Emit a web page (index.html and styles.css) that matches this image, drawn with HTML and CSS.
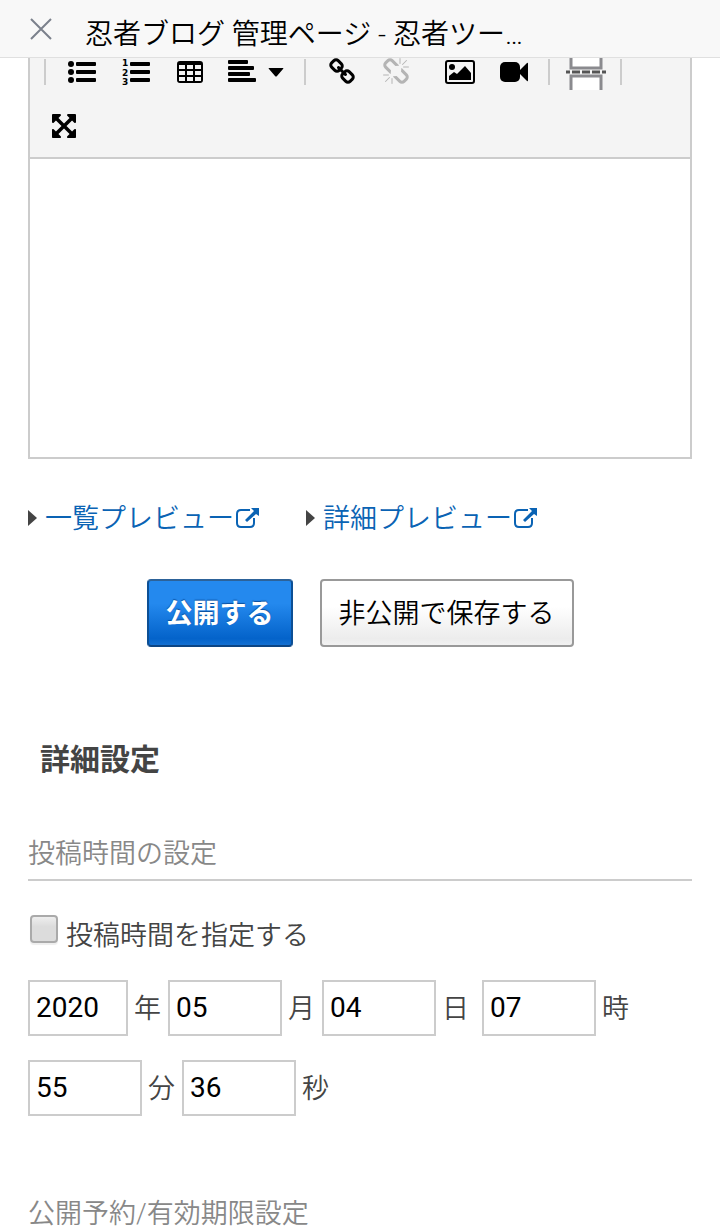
FILE: index.html
```html
<!DOCTYPE html>
<html lang="ja">
<head>
    <meta charset="UTF-8">
    <meta name="viewport" content="width=device-width, initial-scale=1.0">
    <title>忍者ブログ 管理ページ</title>
    <link rel="stylesheet" href="styles.css">
</head>
<body>

    <!-- Title bar -->
    <header class="titlebar">
        <button type="button" class="close" aria-label="閉じる">
            <svg width="24" height="24" viewBox="0 0 24 24"><path d="M2 2L22 22M22 2L2 22" fill="none" stroke="#7b818c" stroke-width="2"/></svg>
        </button>
        <p class="titlebar-text">忍者ブログ 管理ページ - 忍者ツー…</p>
    </header>

    <main class="page">
        <!-- Editor -->
        <div class="editor">
            <div class="toolbar">
                <span class="separator"></span>
                <button type="button" class="tool" aria-label="箇条書き">
                    <svg width="28" height="24" viewBox="0 0 28 24">
                        <circle cx="3" cy="4" r="3"/><circle cx="3" cy="12" r="3"/><circle cx="3" cy="20" r="3"/>
                        <rect x="8" y="2" width="20" height="4" rx="1"/><rect x="8" y="10" width="20" height="4" rx="1"/><rect x="8" y="18" width="20" height="4" rx="1"/>
                    </svg>
                </button>
                <button type="button" class="tool" aria-label="番号付きリスト">
                    <svg class="numbers" width="28" height="36" viewBox="0 0 28 36">
                        <text x="0" y="12">1</text><text x="0" y="22">2</text><text x="0" y="31">3</text>
                        <rect x="8" y="8" width="20" height="4" rx="1"/><rect x="8" y="16" width="20" height="4" rx="1"/><rect x="8" y="24" width="20" height="4" rx="1"/>
                    </svg>
                </button>
                <button type="button" class="tool" aria-label="表">
                    <svg width="26" height="24" viewBox="0 0 26 24">
                        <path fill-rule="evenodd" d="M3 1H23Q26 1 26 4V20Q26 23 23 23H3Q0 23 0 20V4Q0 1 3 1ZM2 5V9H8V5ZM10 5V9H16V5ZM18 5V9H24V5ZM2 11V15H8V11ZM10 11V15H16V11ZM18 11V15H24V11ZM2 17V21H8V17ZM10 17V21H16V17ZM18 17V21H24V17Z"/>
                    </svg>
                </button>
                <button type="button" class="tool tool-wide" aria-label="配置">
                    <svg width="28" height="28" viewBox="0 0 28 28">
                        <rect x="0" y="2" width="20" height="4" rx="1"/><rect x="0" y="8" width="26" height="4" rx="1"/><rect x="0" y="14" width="22" height="4" rx="1"/><rect x="0" y="20" width="28" height="4" rx="1"/>
                    </svg>
                    <svg width="16" height="10" viewBox="0 0 16 10"><path d="M1 1H15Q16 1 15 2L9 9Q8 10 7 9L1 2Q0 1 1 1Z"/></svg>
                </button>
                <span class="separator"></span>
                <button type="button" class="tool" aria-label="リンク">
                    <svg width="28" height="28" viewBox="0 0 1792 1792"><path d="M1520 1216q0-40-28-68l-208-208q-28-28-68-28-42 0-72 32 3 3 19 18.500t21.500 21.500 15 19 13 25.500 3.500 27.500q0 40-28 68t-68 28q-15 0-27.500-3.500t-25.500-13-19-15-21.500-21.500-18.500-19q-33 31-33 73 0 40 28 68l206 207q27 27 68 27 40 0 68-26l147-146q28-28 28-67zm-703-705q0-40-28-68l-206-207q-28-28-68-28-39 0-68 27l-147 146q-28 28-28 67 0 40 28 68l208 208q27 27 68 27 42 0 72-31-3-3-19-18.500t-21.500-21.500-15-19-13-25.500-3.500-27.500q0-40 28-68t68-28q15 0 27.500 3.500t25.500 13 19 15 21.500 21.500 18.500 19q33-31 33-73zm895 705q0 120-85 203l-147 146q-83 83-203 83-121 0-204-85l-206-207q-83-83-83-203 0-123 88-209l-88-88q-86 88-208 88-120 0-204-84l-208-208q-84-84-84-204t85-203l147-146q83-83 203-83 121 0 204 85l206 207q83 83 83 203 0 123-88 209l88 88q86-88 208-88 120 0 204 84l208 208q84 84 84 204z"/></svg>
                </button>
                <button type="button" class="tool tool-off" aria-label="リンク解除" disabled>
                    <svg width="28" height="28" viewBox="0 0 1792 1792"><path d="M503 1271l-256 256q-10 9-23 9-12 0-23-9-9-10-9-23t9-23l256-256q10-9 23-9t23 9q9 10 9 23t-9 23zm169 41v320q0 14-9 23t-23 9-23-9-9-23v-320q0-14 9-23t23-9 23 9 9 23zm-224-224q0 14-9 23t-23 9h-320q-14 0-23-9t-9-23 9-23 23-9h320q14 0 23 9t9 23zm1264 128q0 120-85 203l-147 146q-83 83-203 83-121 0-204-85l-334-335q-21-21-42-56l239-18 273 274q28 28 68 27.500t68-27.500l147-146q28-28 28-67 0-40-28-68l-274-275 18-239q35 21 56 42l336 336q84 86 84 204zm-617-724l-239 18-273-274q-28-28-68-28-39 0-68 27l-147 146q-28 28-28 67 0 40 28 68l274 274-18 240q-35-21-56-42l-336-336q-84-86-84-204 0-120 85-203l147-146q83-83 203-83 121 0 204 85l334 335q21 21 42 56zm633 84q0 14-9 23t-23 9h-320q-14 0-23-9t-9-23 9-23 23-9h320q14 0 23 9t9 23zm-544-544v320q0 14-9 23t-23 9-23-9-9-23v-320q0-14 9-23t23-9 23 9 9 23zm407 151l-256 256q-11 9-23 9t-23-9q-9-10-9-23t9-23l256-256q10-9 23-9t23 9q9 10 9 23t-9 23z"/></svg>
                </button>
                <button type="button" class="tool tool-media" aria-label="画像">
                    <svg width="30" height="24" viewBox="0 0 30 24">
                        <rect x="1" y="1" width="28" height="22" rx="2" fill="none" stroke="#000" stroke-width="2"/>
                        <circle cx="7" cy="7" r="3"/><path d="M4 20V16L9 12L12 14L20 6L26 13V20Z"/>
                    </svg>
                </button>
                <button type="button" class="tool" aria-label="動画">
                    <svg width="28" height="20" viewBox="0 0 28 20"><rect width="20" height="20" rx="5"/><path d="M20 8L27 1Q28 0 28 2V18Q28 20 27 19L20 12Z"/></svg>
                </button>
                <span class="separator"></span>
                <button type="button" class="tool" aria-label="続きを読む">
                    <svg width="40" height="36" viewBox="0 0 40 36">
                        <path d="M5 0V14H35V0M5 36V22H35V36" fill="#fff" stroke="#8a8a8e" stroke-width="3"/>
                        <path d="M0 18H40" stroke="#555" stroke-width="3" stroke-dasharray="4 2 8 2 8 2 8 2 4 0"/>
                    </svg>
                </button>
                <span class="separator"></span>
                <button type="button" class="tool" aria-label="全画面">
                    <svg width="28" height="28" viewBox="0 0 1792 1792"><path d="M1411 541l-355 355 355 355 144-144q29-31 70-14 39 17 39 59v448q0 26-19 45t-45 19h-448q-42 0-59-40-17-39 14-69l144-144-355-355-355 355 144 144q31 30 14 69-17 40-59 40h-448q-26 0-45-19t-19-45v-448q0-42 40-59 39-17 69 14l144 144 355-355-355-355-144 144q-19 19-45 19-12 0-24-5-40-17-40-59v-448q0-26 19-45t45-19h448q42 0 59 40 17 39-14 69l-144 144 355 355 355-355-144-144q-31-30-14-69 17-40 59-40h448q26 0 45 19t19 45v448q0 42-39 59-13 5-25 5-26 0-45-19z"/></svg>
                </button>
            </div>
            <textarea class="editor-body" aria-label="本文"></textarea>
        </div>

        <!-- Preview links -->
        <div class="previews">
            <a class="preview" href="#list">
                <svg class="arrow" width="10" height="16" viewBox="0 0 10 16"><path d="M0 0L9 8L0 16Z"/></svg>
                <span class="preview-text">一覧プレビュー</span>
                <svg width="24" height="22" viewBox="0 0 24 22"><path d="M14 3H5Q1 3 1 7V16Q1 20 5 20H14Q18 20 18 16V11" fill="none" stroke="#0a63b4" stroke-width="2"/><path d="M15 1H23V9L20 7L11 15L9 13L18 4Z"/></svg>
            </a>
            <a class="preview" href="#detail">
                <svg class="arrow" width="10" height="16" viewBox="0 0 10 16"><path d="M0 0L9 8L0 16Z"/></svg>
                <span class="preview-text">詳細プレビュー</span>
                <svg width="24" height="22" viewBox="0 0 24 22"><path d="M14 3H5Q1 3 1 7V16Q1 20 5 20H14Q18 20 18 16V11" fill="none" stroke="#0a63b4" stroke-width="2"/><path d="M15 1H23V9L20 7L11 15L9 13L18 4Z"/></svg>
            </a>
        </div>

        <div class="actions">
            <button type="submit" class="btn btn-primary">公開する</button>
            <button type="button" class="btn">非公開で保存する</button>
        </div>

        <!-- Detail settings -->
        <h2>詳細設定</h2>

        <h3 class="ruled">投稿時間の設定</h3>
        <div class="check">
            <input type="checkbox" id="setTime">
            <label for="setTime">投稿時間を指定する</label>
        </div>
        <div class="fields">
            <div class="field"><input class="year" type="text" id="year" value="2020"><label for="year">年</label></div>
            <div class="field"><input type="text" id="month" value="05"><label for="month">月</label></div>
            <div class="field field-day"><input type="text" id="day" value="04"><label for="day">日</label></div>
            <div class="field"><input type="text" id="hour" value="07"><label for="hour">時</label></div>
            <div class="field"><input type="text" id="minute" value="55"><label for="minute">分</label></div>
            <div class="field"><input type="text" id="second" value="36"><label for="second">秒</label></div>
        </div>

        <h3 class="reserve">公開予約/有効期限設定</h3>
    </main>

</body>
</html>
```
FILE: styles.css
```css
/* Reset and base styles */
* {
    box-sizing: border-box;
    margin: 0;
    padding: 0;
}
body {
    font-family: Roboto, "Noto Sans CJK JP", sans-serif;
    font-size: 27px;
    line-height: 36px;
    font-weight: 350;
    color: #444;
    background: #fff;
}
button, input, textarea {
    font: inherit;
}
svg {
    display: block;
    flex: none;
}
/* Title bar */
.titlebar {
    position: fixed;
    top: 0;
    left: 0;
    right: 0;
    z-index: 1;
    display: flex;
    align-items: flex-start;
    gap: 32px;
    height: 58px;
    padding: 17px 29px 0;
    background: #f8f8f8;
    border-bottom: 1px solid #e0e0e0;
}
.close {
    border: none;
    background: none;
}
.titlebar-text {
    font-size: 28px;
    color: #000;
    white-space: nowrap;
}
.page {
    padding: 39px 28px 0;
}
/* Editor */
.editor {
    border: 2px solid #ccc;
}
.toolbar {
    display: flex;
    flex-wrap: wrap;
    align-items: center;
    padding: 4px 7px;
    background: #f4f4f4;
    border-bottom: 2px solid #ccc;
}
.separator {
    width: 2px;
    height: 26px;
    margin: 0 9px 0 7px;
    background: #ccc;
}
.tool {
    display: flex;
    align-items: center;
    justify-content: center;
    width: 54px;
    height: 54px;
    border: none;
    background: none;
}
.tool-wide {
    gap: 12px;
    width: 80px;
    padding-right: 2px;
}
.tool-off {
    fill: #b4b4b4;
}
.tool-media {
    margin-left: 10px;
}
.numbers {
    font-family: "DejaVu Sans", sans-serif;
    font-size: 9px;
    font-weight: bold;
}
.editor-body {
    display: block;
    width: 100%;
    height: 298px;
    padding: 8px;
    border: none;
    resize: none;
}
/* Preview links */
.previews {
    display: flex;
    gap: 46px;
    margin-top: 41px;
}
.preview {
    display: flex;
    align-items: center;
    color: #0a63b4;
    fill: #0a63b4;
    text-decoration: none;
}
.preview-text {
    padding: 2px 2px 0 0;
    line-height: 34px;
}
.arrow {
    margin-right: 7px;
    fill: #444;
}
/* Buttons */
.actions {
    display: flex;
    justify-content: center;
    gap: 27px;
    margin-top: 43px;
}
.btn {
    height: 68px;
    padding: 2px 17px 0;
    border: 2px solid #999;
    border-radius: 4px;
    background: linear-gradient(#fff 40%, #ececec 90%, #f2f2f2);
    color: #000;
}
.btn-primary {
    border-color: #2c6299 #0c4f94 #0c4584;
    background: linear-gradient(#2489ee 35%, #0463ca 90%, #1470d2);
    color: #fff;
    font-weight: bold;
    text-shadow: 0 -1px 1px #0a4f9e;
}
/* Settings */
h2 {
    margin: 93px 12px 0;
    font-size: 30px;
    line-height: 40px;
    font-weight: bold;
}
h3 {
    font-size: 27px;
    font-weight: 350;
    color: #888;
}
.ruled {
    margin-top: 56px;
    padding-bottom: 7px;
    border-bottom: 2px solid #ccc;
}
.reserve {
    margin-top: 80px;
}
.check {
    display: flex;
    gap: 8px;
    margin-top: 34px;
    padding-left: 2px;
}
.check input {
    appearance: none;
    width: 28px;
    height: 28px;
    border: 2px solid #aaa;
    border-radius: 4px;
    background: linear-gradient(#eee, #dcdcdc 40%);
    box-shadow: 0 2px 1px #eee;
}
.check label {
    padding-top: 3px;
}
.fields {
    display: flex;
    flex-wrap: wrap;
    gap: 24px 7px;
    margin-top: 26px;
}
.field {
    display: flex;
    align-items: center;
    gap: 6px;
}
.field label {
    padding-top: 2px;
}
.field-day {
    margin-right: 6px;
}
.field input {
    width: 114px;
    height: 56px;
    padding: 0 6px 2px;
    border: 2px solid #ccc;
    background: #fff;
    color: #000;
    font-size: 28px;
    font-weight: 400;
}
.field .year {
    width: 100px;
}
```
